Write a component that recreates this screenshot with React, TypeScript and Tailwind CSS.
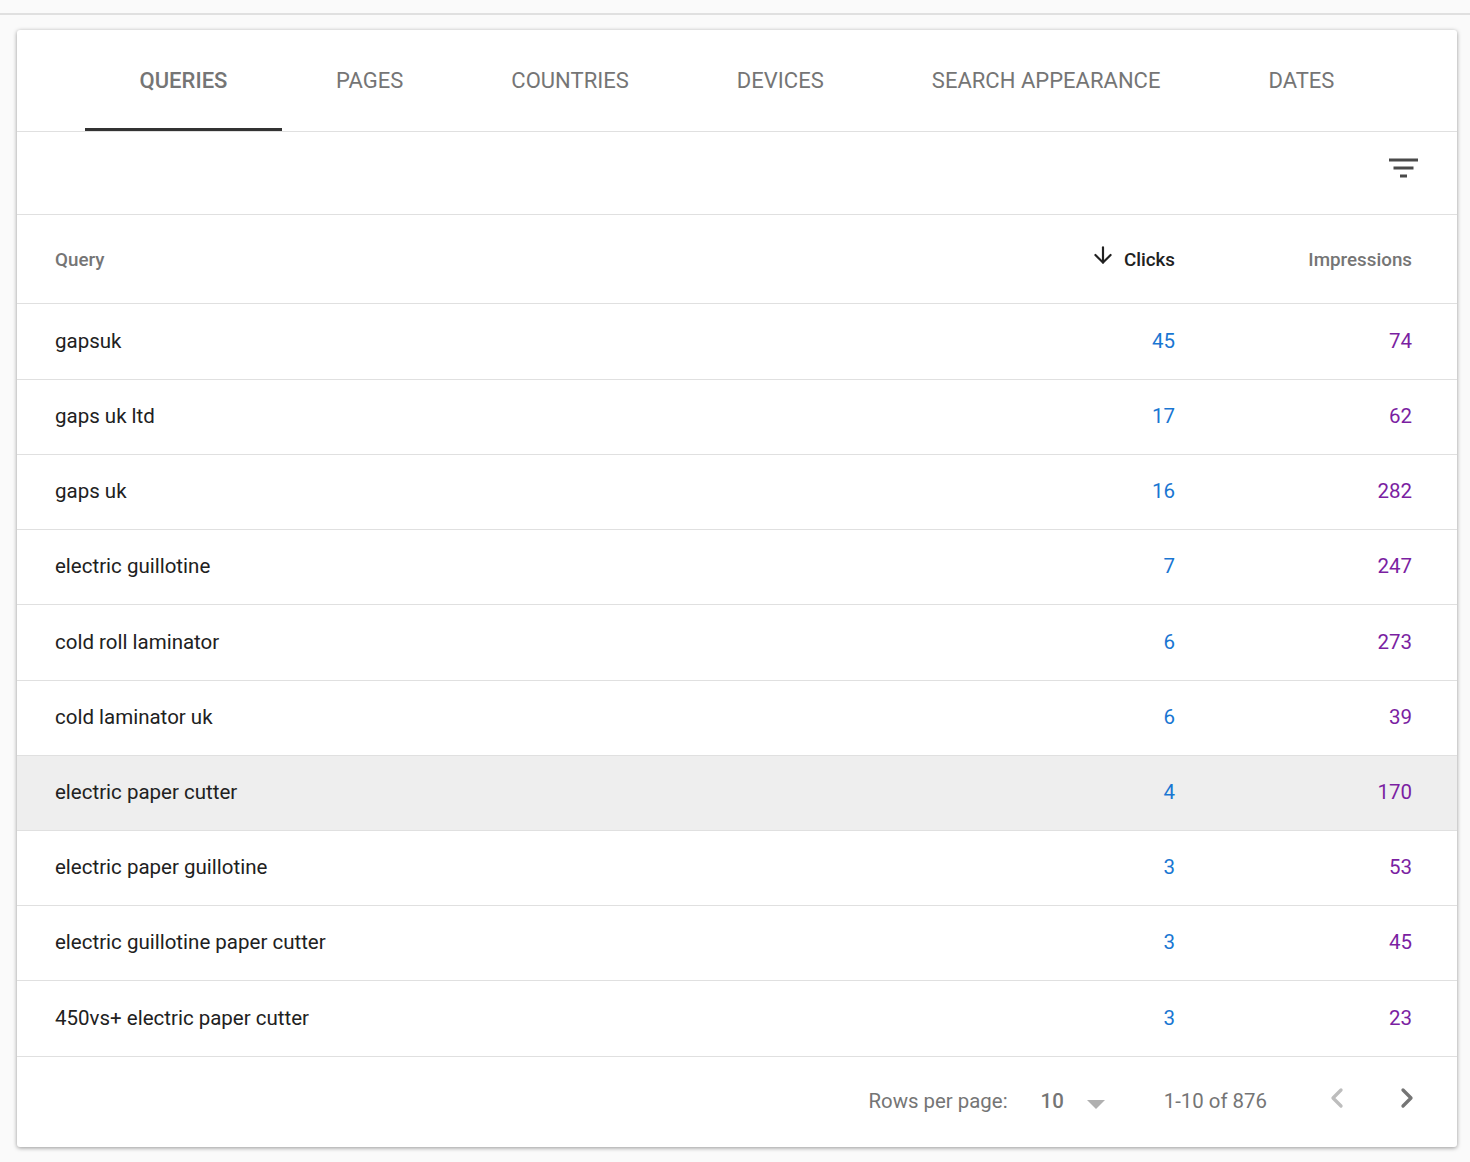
import { ArrowDown, ChevronLeft, ChevronRight } from 'lucide-react'

const TABS = ['QUERIES', 'PAGES', 'COUNTRIES', 'DEVICES', 'SEARCH APPEARANCE', 'DATES']

const ROWS = [
  { query: 'gapsuk', clicks: 45, impressions: 74, tall: true },
  { query: 'gaps uk ltd', clicks: 17, impressions: 62 },
  { query: 'gaps uk', clicks: 16, impressions: 282 },
  { query: 'electric guillotine', clicks: 7, impressions: 247 },
  { query: 'cold roll laminator', clicks: 6, impressions: 273, tall: true },
  { query: 'cold laminator uk', clicks: 6, impressions: 39 },
  { query: 'electric paper cutter', clicks: 4, impressions: 170, hovered: true },
  { query: 'electric paper guillotine', clicks: 3, impressions: 53 },
  { query: 'electric guillotine paper cutter', clicks: 3, impressions: 45 },
  { query: '450vs+ electric paper cutter', clicks: 3, impressions: 23, tall: true },
]

function FilterIcon() {
  return (
    <svg width="29" height="21" viewBox="0 0 29 21" className="text-[#4a4a4a]" fill="currentColor">
      <rect x="0" y="0.5" width="29" height="3" />
      <rect x="4.5" y="8.5" width="20" height="3" />
      <rect x="11" y="16.5" width="7" height="3" />
    </svg>
  )
}

export default function App() {
  return (
    <div className="h-[1162px] bg-[#fafafa] font-['Roboto',sans-serif] overflow-hidden">
      <div className="h-[15px] border-b-2 border-[#e0e0e0]" />
      <div className="ml-[17px] mt-[15px] w-[1440px] h-[1117px] bg-white rounded-[3px] shadow-[0_1px_4px_rgba(0,0,0,0.4)]">
        <div className="flex h-[102px] pl-[68px] border-b border-[#e0e0e0]">
          {TABS.map((tab, i) => (
            <div
              key={tab}
              className={`relative flex h-[102px] items-center pb-[2px] text-[22px] tracking-[0.02px] text-[#757575] ${
                i === 0 ? 'w-[197px] justify-center font-medium' : 'px-[54px]'
              }`}
            >
              {tab}
              {i === 0 && <div className="absolute bottom-[1px] left-0 right-0 h-[3px] bg-[#333333]" />}
            </div>
          ))}
        </div>

        <div className="flex h-[83px] justify-end pt-[26px] pr-[39px] border-b border-[#e0e0e0]">
          <FilterIcon />
        </div>

        <div className="flex h-[89px] items-center border-b border-[#e0e0e0] pl-[38px] pr-[45px] pt-[2px] text-[18.8px] font-medium">
          <div className="flex-1 text-[#757575]">Query</div>
          <div className="flex w-[200px] items-center justify-end text-[#212121]">
            <ArrowDown size={26} strokeWidth={2} className="mr-[8px] mb-[10px]" />
            Clicks
          </div>
          <div className="w-[237px] text-right text-[#757575]">Impressions</div>
        </div>

        {ROWS.map(row => (
          <div
            key={row.query}
            className={`flex items-center border-b border-[#e0e0e0] pl-[38px] pr-[45px] text-[20.5px] ${
              row.tall ? 'h-[76px]' : 'h-[75px] pb-[2px]'
            } ${row.hovered ? 'bg-[#eeeeee]' : ''}`}
          >
            <div className="flex-1 text-[#212121]">{row.query}</div>
            <div className="w-[200px] text-right text-[#1976d2]">{row.clicks}</div>
            <div className="w-[237px] text-right text-[#7b1fa2]">{row.impressions}</div>
          </div>
        ))}

        <div className="flex h-[90px] items-center justify-end pb-[2px] text-[20.4px] text-[#757575]">
          <span>Rows per page:</span>
          <span className="ml-[33px] font-medium">10</span>
          <div className="ml-[23px] mt-[6px] h-0 w-0 border-x-[9px] border-t-[9px] border-x-transparent border-t-[#b0b0b0]" />
          <span className="ml-[59px]">1-10 of 876</span>
          <ChevronLeft size={32} strokeWidth={2.5} className="ml-[54px] mb-[6px] text-[#bdbdbd]" />
          <ChevronRight size={32} strokeWidth={2.5} className="ml-[38px] mr-[34px] mb-[6px] text-[#757575]" />
        </div>
      </div>
    </div>
  )
}
